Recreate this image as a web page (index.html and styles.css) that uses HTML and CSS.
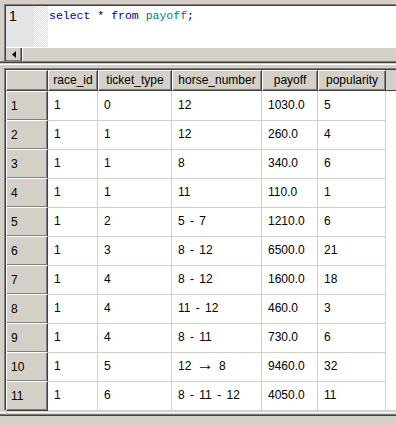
FILE: index.html
```html
<!DOCTYPE html>
<html lang="ja">
<head>
    <meta charset="UTF-8">
    <title>Query - payoff</title>
    <link rel="stylesheet" href="styles.css">
</head>
<body>
    <div class="editor">
        <div class="editor-main">
            <div class="gutter">1</div>
            <div class="dots"></div>
            <div class="code"><span class="kw">select</span> * <span class="kw">from</span> <span class="ident">payoff</span>;</div>
        </div>
        <div class="hscroll">
            <div class="scroll-btn">
                <svg width="4" height="7" viewBox="0 0 4 7"><path d="M4 0 L0 3.5 L4 7 Z" fill="#000"/></svg>
            </div>
            <div class="scroll-track"></div>
        </div>
    </div>

    <div class="splitter"></div>

    <div class="results">
        <div class="grid-row header">
            <div class="hcell corner"></div>
            <div class="hcell">race_id</div>
            <div class="hcell">ticket_type</div>
            <div class="hcell">horse_number</div>
            <div class="hcell">payoff</div>
            <div class="hcell">popularity</div>
            <div class="hfill"></div>
        </div>
        <div id="rows"></div>
    </div>

    <div class="status"></div>

    <script>
        // result set
        const data = [
            ['1', '0', '12', '1030.0', '5'],
            ['1', '1', '12', '260.0', '4'],
            ['1', '1', '8', '340.0', '6'],
            ['1', '1', '11', '110.0', '1'],
            ['1', '2', '5 - 7', '1210.0', '6'],
            ['1', '3', '8 - 12', '6500.0', '21'],
            ['1', '4', '8 - 12', '1600.0', '18'],
            ['1', '4', '11 - 12', '460.0', '3'],
            ['1', '4', '8 - 11', '730.0', '6'],
            ['1', '5', '12 <span class="arrow">\u2192</span> 8', '9460.0', '32'],
            ['1', '6', '8 - 11 - 12', '4050.0', '11']
        ];

        const rows = document.getElementById('rows');
        data.forEach((row, i) => {
            const el = document.createElement('div');
            el.className = 'grid-row';
            let html = '<div class="rowhead">' + (i + 1) + '</div>';
            row.forEach(v => {
                html += '<div class="cell">' + v + '</div>';
            });
            html += '<div class="fill"></div>';
            el.innerHTML = html;
            rows.appendChild(el);
        });
    </script>
</body>
</html>
```

FILE: styles.css
```css
:root {
    --face: #d4d0c8;
    --shadow: #808080;
    --dark: #404040;
    --grid-line: #d4d0c8;
}

* {
    margin: 0;
    padding: 0;
    box-sizing: border-box;
}

body {
    width: 396px;
    height: 425px;
    overflow: hidden;
    background: var(--face);
    font-family: 'Liberation Sans', Arial, sans-serif;
    font-size: 12px;
    color: #000;
}

/* sql editor */
.editor {
    margin: 4px 0 0 4px;
    border-top: 1px solid var(--shadow);
    border-left: 1px solid var(--shadow);
    box-shadow: inset 1px 1px 0 var(--dark);
    padding: 1px 0 0 1px;
}

.editor-main {
    display: flex;
    height: 41px;
    background: #fff;
}

.gutter {
    width: 28px;
    background: #e4e4e4;
    padding: 2px 0 0 3px;
    font-size: 14px;
    line-height: 16px;
}

.dots {
    width: 14px;
    background: repeating-conic-gradient(#dcdcdc 0 25%, #fff 0 50%) 0 0 / 2px 2px;
}

.code {
    flex: 1;
    padding: 2px 0 0 1px;
    font-family: 'Liberation Mono', monospace;
    font-size: 11.5px;
    line-height: 15px;
    white-space: pre;
}

    .code .kw {
        color: #0000a0;
    }

    .code .ident {
        color: #008080;
    }

.hscroll {
    display: flex;
    height: 14px;
    border-top: 1px solid #fff;
}

.scroll-btn {
    width: 16px;
    display: flex;
    align-items: center;
    justify-content: center;
    border-right: 1px solid var(--dark);
    box-shadow: inset -1px -1px 0 var(--shadow);
}

.scroll-track {
    flex: 1;
    border-left: 1px solid #fff;
}

.splitter {
    height: 7px;
    border-top: 1px solid var(--shadow);
    box-shadow: inset 0 1px 0 var(--dark);
}

    .splitter::after {
        content: '';
        display: block;
        margin-top: 2px;
        border-top: 1px solid #fff;
    }

/* result grid */
.results {
    margin-left: 4px;
    border-top: 1px solid var(--shadow);
    border-left: 1px solid var(--shadow);
    box-shadow: inset 1px 1px 0 var(--dark);
    padding: 1px 0 0 1px;
    background: #fff;
}

.grid-row {
    display: grid;
    grid-template-columns: 42px 50px 74px 90px 56px 68px 1fr;
    height: 29px;
}

    .grid-row.header {
        height: 21px;
        background: var(--face);
    }

.hcell {
    background: var(--face);
    border-top: 1px solid #fff;
    border-left: 1px solid #fff;
    border-right: 1px solid var(--dark);
    border-bottom: 1px solid var(--dark);
    box-shadow: inset -1px -1px 0 var(--shadow);
    text-align: center;
    line-height: 18px;
    white-space: nowrap;
}

.hfill {
    border-bottom: 1px solid var(--dark);
}

.rowhead {
    background: var(--face);
    border-top: 1px solid #fff;
    border-left: 1px solid #fff;
    border-right: 1px solid var(--dark);
    border-bottom: 1px solid var(--dark);
    box-shadow: inset -1px -1px 0 var(--shadow);
    padding-left: 4px;
    line-height: 28px;
}

.cell {
    border-right: 1px solid var(--grid-line);
    border-bottom: 1px solid var(--grid-line);
    padding-left: 6px;
    line-height: 28px;
    white-space: pre;
    word-spacing: 2px;
}

    .cell .arrow {
        font-size: 17px;
        line-height: 12px;
    }

.status {
    height: 20px;
    border-top: 1px solid #fff;
    margin-top: 2px;
    box-shadow: inset 0 1px 0 var(--face), inset 0 2px 0 var(--shadow), inset 0 3px 0 var(--dark);
}
```
